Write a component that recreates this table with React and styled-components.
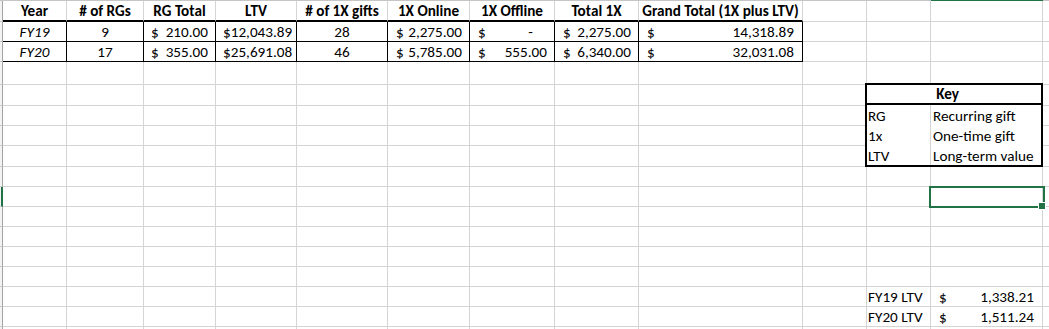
import React from 'react';
import styled, { createGlobalStyle } from 'styled-components';

const GRID = '#d4d4d4';
const GREEN = '#217346';

const GlobalStyle = createGlobalStyle`
  html, body { margin: 0; padding: 0; background: #fff; overflow: hidden; }
  body {
    font-family: Carlito, Lato, "Liberation Sans", sans-serif;
    font-size: 15.2px;
    color: #000;
  }
`;

const COLS = [64, 77, 72, 81, 91, 82, 85, 84, 164, 64, 64, 112, 64];
const ROWS = [21, 20, 20, 23, 21, 20, 20, 21, 20, 20, 20, 20, 20, 20, 20, 20, 20];

const Viewport = styled.div`
  width: 1049px;
  height: 329px;
  overflow: hidden;
`;

const Sheet = styled.div`
  display: grid;
  grid-template-columns: 3px ${COLS.map((c) => `${c}px`).join(' ')};
  grid-template-rows: 1px ${ROWS.map((r) => `${r}px`).join(' ')};
  width: max-content;
`;

const Corner = styled.div`
  background: #c6c6c6;
`;

const ColEdge = styled.div`
  background: ${(p) => (p.$active ? GREEN : '#c6c6c6')};
`;

const RowStub = styled.div`
  box-sizing: border-box;
  background: #f3f3f3;
  border-right: ${(p) => (p.$active ? `2px solid ${GREEN}` : '1px solid #a3a3a3')};
  border-bottom: 1px solid #c8c8c8;
`;

const Cell = styled.div`
  box-sizing: border-box;
  position: relative;
  min-width: 0;
  display: flex;
  align-items: flex-end;
  justify-content: ${(p) => p.$justify || 'flex-start'};
  padding: 0 ${(p) => p.$pr ?? 2}px 0 ${(p) => p.$pl ?? 2}px;
  border-right: 1px solid ${(p) => (p.$edge === 'black' ? '#000' : GRID)};
  border-bottom: ${(p) =>
    p.$base === 'thick' ? '2px solid #000' : p.$base === 'black' ? '1px solid #000' : `1px solid ${GRID}`};
  font-weight: ${(p) => (p.$bold ? 700 : 400)};
  font-style: ${(p) => (p.$italic ? 'italic' : 'normal')};
  line-height: 17px;
  white-space: nowrap;
`;

const Dash = styled.span`
  margin-right: 14px;
`;

const SelectionFrame = styled.div`
  position: absolute;
  top: -1px;
  left: -2px;
  right: -3px;
  bottom: -2px;
  border: 2px solid ${GREEN};
  z-index: 3;
  pointer-events: none;
`;

const FillHandle = styled.div`
  position: absolute;
  right: -3px;
  bottom: -3px;
  width: 6px;
  height: 6px;
  background: ${GREEN};
  box-shadow: 0 0 0 1px #fff;
  z-index: 4;
`;

const KeyBox = styled.div`
  grid-column: 12 / 14;
  grid-row: 6 / 10;
  margin: -2px 0 0 -2px;
  border: 2px solid #000;
  background: #fff;
  display: grid;
  grid-template-columns: 64px 1fr;
  grid-template-rows: repeat(4, 20px);
  z-index: 1;
  line-height: 17px;
`;

const KeyTitle = styled.div`
  grid-column: 1 / -1;
  box-sizing: border-box;
  display: flex;
  align-items: flex-end;
  justify-content: center;
  padding-right: 13px;
  border-bottom: 2px solid #000;
  font-weight: 700;
`;

const KeyTerm = styled.div`
  box-sizing: border-box;
  display: flex;
  align-items: flex-end;
  padding-left: 1px;
  border-right: 1px solid ${GRID};
`;

const KeyDef = styled.div`
  display: flex;
  align-items: flex-end;
  padding-left: 2px;
  white-space: nowrap;
`;

const HEADERS = [
  'Year',
  '# of RGs',
  'RG Total',
  'LTV',
  '# of 1X gifts',
  '1X Online',
  '1X Offline',
  'Total 1X',
  'Grand Total (1X plus LTV)',
];

const DATA = [
  { year: 'FY19', rgs: '9', rgTotal: '210.00', ltv: '12,043.89', gifts: '28', online: '2,275.00', offline: null, total: '2,275.00', grand: '14,318.89' },
  { year: 'FY20', rgs: '17', rgTotal: '355.00', ltv: '25,691.08', gifts: '46', online: '5,785.00', offline: '555.00', total: '6,340.00', grand: '32,031.08' },
];

const KEY = [
  ['RG', 'Recurring gift'],
  ['1x', 'One-time gift'],
  ['LTV', 'Long-term value'],
];

const LTV_SUMMARY = [
  ['FY19 LTV', '1,338.21'],
  ['FY20 LTV', '1,511.24'],
];

const Money = ({ value, pl = 8, pr = 7, ...rest }) => (
  <Cell $justify="space-between" $pl={pl} $pr={pr} {...rest}>
    <span>$</span>
    {value == null ? <Dash>-</Dash> : <span>{value}</span>}
  </Cell>
);

function buildRow(r) {
  const cells = [];
  if (r === 1) {
    HEADERS.forEach((h) =>
      cells.push(
        <Cell key={h} $base="thick" $justify="center" $bold>
          {h}
        </Cell>
      )
    );
  } else if (r === 2 || r === 3) {
    const d = DATA[r - 2];
    const b = { $base: 'black', $edge: 'black' };
    cells.push(<Cell key="y" {...b} $justify="center" $italic>{d.year}</Cell>);
    cells.push(<Cell key="r" {...b} $justify="center">{d.rgs}</Cell>);
    cells.push(<Money key="rt" {...b} value={d.rgTotal} pl={7} pr={7} />);
    cells.push(<Money key="l" {...b} value={d.ltv} pl={7} pr={9} />);
    cells.push(<Cell key="g" {...b} $justify="center">{d.gifts}</Cell>);
    cells.push(<Money key="on" {...b} value={d.online} />);
    cells.push(<Money key="off" {...b} value={d.offline} />);
    cells.push(<Money key="t" {...b} value={d.total} />);
    cells.push(<Money key="gt" {...b} value={d.grand} pr={8} />);
  } else {
    for (let c = 0; c < 9; c++) cells.push(<Cell key={c} />);
  }

  cells.push(<Cell key="J" />);
  if (r >= 5 && r <= 8) {
    // occupied by the key table
  } else if (r === 15 || r === 16) {
    const [label, val] = LTV_SUMMARY[r - 15];
    cells.push(<Cell key="K" $pl={1}>{label}</Cell>);
    cells.push(<Money key="L" value={val} pl={8} pr={8} />);
  } else if (r === 10) {
    cells.push(<Cell key="K" />);
    cells.push(
      <Cell key="L">
        <SelectionFrame />
        <FillHandle />
      </Cell>
    );
  } else {
    cells.push(<Cell key="K" />);
    cells.push(<Cell key="L" />);
  }
  cells.push(<Cell key="M" />);
  return cells;
}

export default function App() {
  return (
    <>
      <GlobalStyle />
      <Viewport>
        <Sheet>
          <KeyBox>
            <KeyTitle>Key</KeyTitle>
            {KEY.map(([t, d]) => (
              <React.Fragment key={t}>
                <KeyTerm>{t}</KeyTerm>
                <KeyDef>{d}</KeyDef>
              </React.Fragment>
            ))}
          </KeyBox>

          <Corner />
          {COLS.map((_, i) => (
            <ColEdge key={i} $active={i === 11} />
          ))}

          {ROWS.map((_, idx) => {
            const r = idx + 1;
            return (
              <React.Fragment key={r}>
                <RowStub $active={r === 10} />
                {buildRow(r)}
              </React.Fragment>
            );
          })}
        </Sheet>
      </Viewport>
    </>
  );
}
